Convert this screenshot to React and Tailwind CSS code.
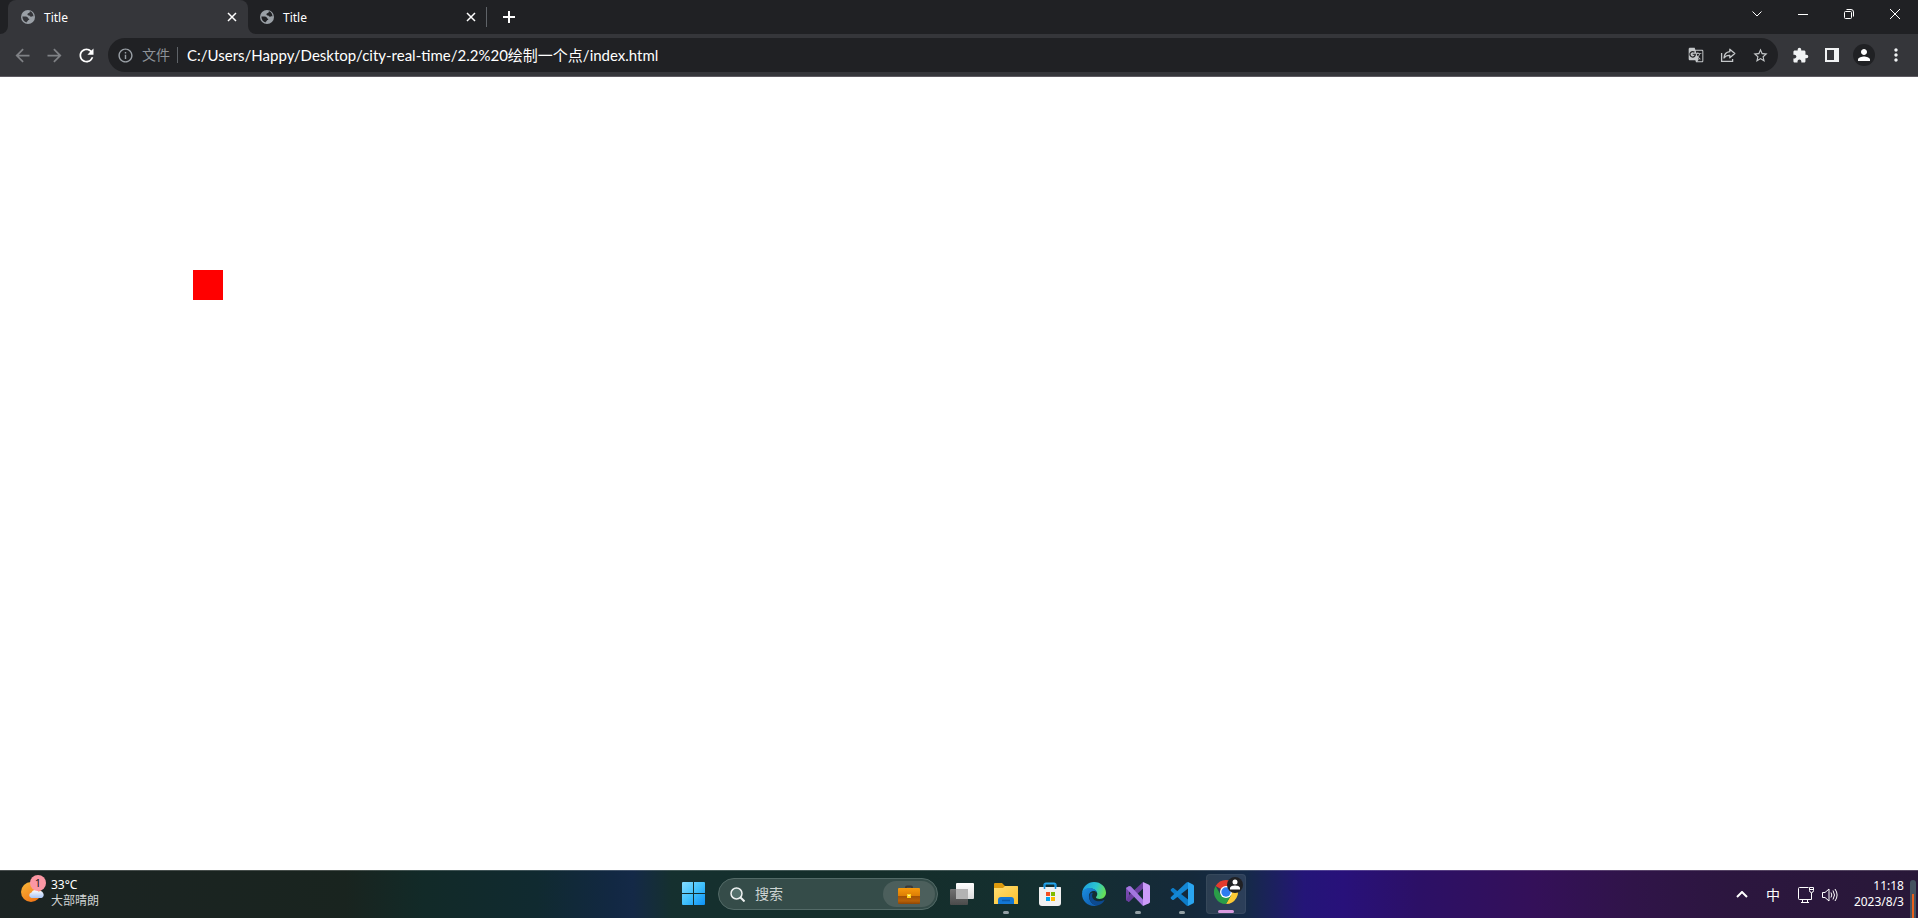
import { useState } from "react";
import {
    MdArrowBack,
    MdArrowForward,
    MdExtension,
    MdGTranslate,
    MdInfoOutline,
    MdMoreVert,
    MdPerson,
    MdRefresh,
    MdStarBorder
} from "react-icons/md";

// ICONS
function GlobeIcon({ className }) {
    return (
        <svg className={`size-[14px] shrink-0 ${className}`} viewBox="0 0 14 14">
            <circle cx="7" cy="7" r="7" fill="#9aa0a6" />
            <path d="M9.2 1.3C8.2 1.8 8.9 2.7 8 3.1 6.6 3.3 6.2 4 6.6 4.9c.6.7 1.5.3 2 .9.5.8 1.3 1.3 2.1.8.7-.5 1.3-.3 1.8 0C12.4 4.1 11.2 2.1 9.2 1.3z" fill="currentColor" />
            <path d="M1.4 6.6c1.4.1 3.4-.3 4.8.4 1 .6.8 1.6 1.7 1.8.7.3.4 1.2-.3 1.3-.9.2-.7 1.2-1.5 1.5-.5.2-.4.6-.3.9C3.2 12 1.3 9.6 1.4 6.6z" fill="currentColor" />
        </svg>
    );
}

function ShareIcon() {
    return (
        <svg className="size-4" viewBox="0 0 16 16" fill="none" stroke="currentColor" strokeWidth="1.3">
            <path d="M1.6 6v8.4h11V12" />
            <path d="M9.8 2.2l5 4.3-5 4.3V8.3C7 8.200 5.300 9 4 11c.2-3.6 2.400-5.900 5.800-6.300z" strokeLinejoin="round" />
        </svg>
    );
}

function WeatherIcon() {
    return (
        <svg className="h-7 w-[26px] shrink-0" viewBox="0 0 26 28">
            <defs>
                <linearGradient id="sun" x1="0" y1="0" x2="0.6" y2="1">
                    <stop offset="0" stopColor="#f9b93a" />
                    <stop offset="1" stopColor="#f07818" />
                </linearGradient>
                <linearGradient id="cloud" x1="0" y1="0" x2="0" y2="1">
                    <stop offset="0" stopColor="#ffffff" />
                    <stop offset="1" stopColor="#a9c4f5" />
                </linearGradient>
            </defs>
            <circle cx="11" cy="17" r="10" fill="url(#sun)" />
            <path d="M11.5 23a2.8 2.8 0 0 1 0-5.5 4 4 0 0 1 7-1 3.2 3.2 0 0 1 3 6.5z" fill="url(#cloud)" />
            <circle cx="18" cy="8" r="8" fill="#fb97a4" />
            <text x="18" y="12" fontSize="11" textAnchor="middle" fill="#1a1a1a">1</text>
        </svg>
    );
}

function WindowsIcon() {
    return (
        <svg className="size-6" viewBox="0 0 24 24">
            <defs>
                <linearGradient id="win" x1="0" y1="0" x2="1" y2="1">
                    <stop offset="0" stopColor="#84dcff" />
                    <stop offset="0.5" stopColor="#41c1fb" />
                    <stop offset="1" stopColor="#0d90f5" />
                </linearGradient>
            </defs>
            <path d="M1 0h10v11H0V1q0-1 1-1zM12 0h10q1 0 1 1v10H12zM0 12h11v11H1q-1 0-1-1zM12 12h11v10q0 1-1 1H12z" fill="url(#win)" />
        </svg>
    );
}

function BriefcaseIcon() {
    return (
        <svg className="h-[19px] w-[22px]" viewBox="0 0 22 19">
            <defs>
                <linearGradient id="bag" x1="0" y1="0" x2="0" y2="1">
                    <stop offset="0" stopColor="#f79a0c" />
                    <stop offset="0.5" stopColor="#dc7d05" />
                    <stop offset="0.52" stopColor="#a35205" />
                    <stop offset="0.8" stopColor="#b86208" />
                    <stop offset="1" stopColor="#8f4604" />
                </linearGradient>
            </defs>
            <path d="M8 4V2.5Q8 1.5 9 1.5h4q1 0 1 1V4" fill="none" stroke="#3b3a39" strokeWidth="2" />
            <rect y="3" width="22" height="16" rx="1" fill="url(#bag)" />
            <rect x="9" y="9" width="4" height="4" fill="#ffd21f" />
            <rect x="10" y="10" width="2" height="1" fill="#fff3a0" />
        </svg>
    );
}

function TaskViewIcon() {
    return (
        <svg className="size-6" viewBox="0 0 24 24">
            <defs>
                <linearGradient id="tv1" x1="0" y1="0" x2="0" y2="1">
                    <stop offset="0" stopColor="#ffffff" />
                    <stop offset="1" stopColor="#dcdcdc" />
                </linearGradient>
                <linearGradient id="tv2" x1="0" y1="0" x2="0" y2="1">
                    <stop offset="0" stopColor="#727272" />
                    <stop offset="1" stopColor="#4a4a4a" />
                </linearGradient>
            </defs>
            <rect y="7" width="18" height="16" rx="1" fill="url(#tv2)" />
            <rect x="6" y="1" width="18" height="16" rx="1" fill="url(#tv1)" />
            <path d="M6 7h12v10H7q-1 0-1-1z" fill="#b3b3b3" />
        </svg>
    );
}

function FolderIcon() {
    return (
        <svg className="size-6" viewBox="0 0 24 24">
            <defs>
                <linearGradient id="folder" x1="0" y1="0" x2="1" y2="1">
                    <stop offset="0" stopColor="#ffdf73" />
                    <stop offset="1" stopColor="#fdbf2b" />
                </linearGradient>
            </defs>
            <path d="M0 2q0-1 1-1h7l3 3h12q1 0 1 1v4H0z" fill="#dd9a0c" />
            <path d="M0 6h9l2-2h12q1 0 1 1v17H0z" fill="url(#folder)" />
            <path d="M4 22v-4q0-3 3-3h10q3 0 3 3v4z" fill="#1377d4" />
            <path d="M8 18.5h8" stroke="#0c5aa8" strokeWidth="1.5" />
        </svg>
    );
}

function StoreIcon() {
    return (
        <svg className="size-6" viewBox="0 0 24 24">
            <path d="M6.5 6V3q0-1.5 1.5-1.5h8q1.5 0 1.5 1.5v3" fill="none" stroke="#28aaf0" strokeWidth="2" />
            <path d="M1 5.5q0-.5.5-.5h21q.5 0 .5.5V21q0 3-3 3H4q-3 0-3-3z" fill="#f1f1f1" />
            <path d="M6.5 1.800V7M17.5 1.800V7" stroke="#1490df" strokeWidth="1.5" />
            <path d="M8 10h4v4H8z" fill="#f25022" />
            <path d="M13 10h4v4h-4z" fill="#7fba00" />
            <path d="M8 15h4v4H8z" fill="#00a4ef" />
            <path d="M13 15h4v4h-4z" fill="#ffb900" />
        </svg>
    );
}

function EdgeIcon() {
    return (
        <svg className="size-6" viewBox="0 0 24 24">
            <defs>
                <linearGradient id="edge1" x1="0" y1="0.2" x2="1" y2="0.5">
                    <stop offset="0" stopColor="#1d9fe0" />
                    <stop offset="0.55" stopColor="#2bc4d0" />
                    <stop offset="1" stopColor="#66e055" />
                </linearGradient>
                <linearGradient id="edge2" x1="0" y1="0" x2="0.8" y2="1">
                    <stop offset="0" stopColor="#1b8fe0" />
                    <stop offset="1" stopColor="#0f5cb0" />
                </linearGradient>
            </defs>
            <path d="M.2 10.5C1 4.3 6 0 12 0c7 0 12 5 12 10.8 0 3.7-2.9 6.1-6.3 6.1-2.2 0-3.7-.8-3.7-1.5 0-.8 1.3-1.2 1.3-3.4 0-3-2.9-5.5-7-5.5-4 0-6.9 1.7-8.1 4z" fill="url(#edge1)" />
            <path d="M0 12C0 8 3.4 5.8 7.5 5.9c4.2 0 7.3 2.3 7.8 5.2-1-1.6-2.6-2.2-4.3-2C8.3 9.500 6.700 12 7 15c.5 4.5 4 8 8 8.5-1 .4-2 .5-3 .5C5.4 24 0 18.600 0 12z" fill="url(#edge2)" />
            <path d="M8.8 11c-3.2 3.5-1.2 10.6 5.7 12.7 3.5-.6 6.3-2.7 7.8-5 .3-.5-.1-.8-.6-.5-4.5 2.4-11.6.9-11.6-4.8 0-.9.3-1.7.8-2.5-.8-.3-1.5-.4-2.1.1z" fill="#0c4a91" />
        </svg>
    );
}

function VisualStudioIcon() {
    return (
        <svg className="size-6" viewBox="0 0 24 24">
            <path d="M0 6l3-2v16l-3-2z" fill="#7648ad" />
            <path d="M3 20L17 6.500V0L3.500 12.500 0 18z" fill="#6a3e9e" />
            <path d="M0 6l3-1.800q1-.6 2 .3L17 17.500V24L3 9.500z" fill="#a376df" />
            <path d="M17 0l6 2.8q1 .5 1 1.5v15.4q0 1-1 1.5L17 24z" fill="#cb9bf8" />
        </svg>
    );
}

function VsCodeIcon() {
    return (
        <svg className="size-6" viewBox="0 0 24 24">
            <path d="M1 7.3l1.5-1.2q.5-.3 1 0L18 17.500V24q-.8 0-1.5-.6L1 9q-.8-.9 0-1.700z" fill="#0d7cc9" />
            <path d="M1 16.7l1.5 1.2q.5.3 1 0L18 6.500V0q-.8 0-1.5.6L1 15q-.8.9 0 1.7z" fill="#1487d4" />
            <path d="M18 0l5 2.6q1 .5 1 1.5v15.8q0 1-1 1.5L18 24z" fill="#2aa5f0" />
        </svg>
    );
}

function ChromeIcon() {
    return (
        <svg className="h-[27px] w-[29px]" viewBox="0 0 29 27">
            <path d="M12 15L1.6 9A12 12 0 0 1 22.4 9z" fill="#e33b2e" />
            <path d="M12 9h10.4A12 12 0 0 1 12 27l5.2-9z" fill="#fcc934" />
            <path d="M1.6 9A12 12 0 0 0 12 27l5.2-9H6.8z" fill="#2a9d48" />
            <circle cx="12" cy="15" r="6" fill="#fff" />
            <circle cx="12" cy="15" r="4.7" fill="#2f7cf0" />
            <circle cx="21" cy="8" r="8" fill="#202124" />
            <circle cx="21" cy="5" r="2.5" fill="#fff" />
            <path d="M16 12.500V11c0-1.700 3-2.500 5-2.500s5 .8 5 2.500v1.500z" fill="#fff" />
        </svg>
    );
}

const apps = [
    { name: "任务视图", icon: <TaskViewIcon /> },
    { name: "文件资源管理器", icon: <FolderIcon />, running: true },
    { name: "Microsoft Store", icon: <StoreIcon /> },
    { name: "Microsoft Edge", icon: <EdgeIcon /> },
    { name: "Visual Studio", icon: <VisualStudioIcon />, running: true },
    { name: "Visual Studio Code", icon: <VsCodeIcon />, running: true },
];

function Tab({ active }) {
    return (
        <div className={`relative flex h-[34px] w-60 items-center gap-[9px] pl-[13px] pr-2 text-white ${active ? "rounded-t-lg bg-[#35363a]" : "-ml-px"}`}>
            <GlobeIcon className={active ? "text-[#35363a]" : "text-[#202124]"} />
            <span className="flex-1 pt-0.5 text-xs">Title</span>
            <button aria-label="关闭标签页" className="flex size-4 items-center justify-center">
                <svg className="size-[10px]" viewBox="0 0 10 10" stroke="currentColor" strokeWidth="1.5"><path d="M1 1l8 8M9 1L1 9" /></svg>
            </button>
            {active ? (
                <>
                    <svg className="absolute bottom-0 -left-2 size-2" viewBox="0 0 8 8"><path d="M8 0v8H0a8 8 0 0 0 8-8z" fill="#35363a" /></svg>
                    <svg className="absolute bottom-0 -right-2 size-2" viewBox="0 0 8 8"><path d="M0 0v8h8a8 8 0 0 1-8-8z" fill="#35363a" /></svg>
                </>
            ) : null}
        </div>
    );
}

function TabStrip() {
    return (
        <div className="flex h-[34px] bg-[#202124] pl-2">
            <Tab active />
            <Tab />
            <div className="mt-[7px] -ml-px h-5 w-px bg-[#5f6368]" />
            <button aria-label="新标签页" className="ml-2 flex h-[34px] w-7 items-center justify-center text-white">
                <svg className="size-3" viewBox="0 0 12 12" stroke="currentColor" strokeWidth="2"><path d="M6 0v12M0 6h12" /></svg>
            </button>
            <div className="ml-auto flex h-7 text-white">
                <button aria-label="搜索标签页" className="flex w-[46px] items-center justify-center">
                    <svg className="h-[6px] w-[10px]" viewBox="0 0 10 6" fill="none" stroke="currentColor"><path d="M.5.5L5 5 9.5.5" /></svg>
                </button>
                <button aria-label="最小化" className="flex w-[46px] items-center justify-center">
                    <span className="h-px w-[10px] bg-white" />
                </button>
                <button aria-label="还原" className="flex w-[46px] items-center justify-center">
                    <svg className="size-[10px]" viewBox="0 0 10 10" fill="none" stroke="currentColor">
                        <rect x="0.5" y="2.5" width="7" height="7" rx="1" />
                        <path d="M2.5.5H7q2.5 0 2.5 2.5v4.5" />
                    </svg>
                </button>
                <button aria-label="关闭" className="flex w-[46px] items-center justify-center">
                    <svg className="size-[10px]" viewBox="0 0 10 10" stroke="currentColor"><path d="M0 0l10 10M10 0L0 10" /></svg>
                </button>
            </div>
        </div>
    );
}

function Toolbar() {
    const [url, setUrl] = useState("C:/Users/Happy/Desktop/city-real-time/2.2%20绘制一个点/index.html");

    return (
        <div className="flex h-[43px] items-center border-b border-[#5d5a61] bg-[#35363a] px-1.5">
            <div className="flex text-[#7f8185]">
                <button aria-label="后退" className="flex size-8 items-center justify-center"><MdArrowBack size={21} /></button>
                <button aria-label="前进" className="flex size-8 items-center justify-center"><MdArrowForward size={21} /></button>
                <button aria-label="重新加载" className="flex size-8 items-center justify-center text-white"><MdRefresh size={21} /></button>
            </div>
            <div className="ml-1.5 flex h-[34px] flex-1 items-center rounded-full bg-[#202124] pl-[9px] pr-0.5 text-sm">
                <MdInfoOutline size={17} className="shrink-0 text-[#9aa0a6]" />
                <label htmlFor="url" className="ml-2 text-[#8d9298]">文件</label>
                <div className="ml-[7px] h-4 w-px bg-[#5f6368]" />
                <input id="url" type="text" value={url} onChange={(e) => setUrl(e.target.value)} className="ml-[9px] h-8 flex-1 bg-transparent pb-0.5 font-['Lato','Noto_Sans_CJK_SC',sans-serif] text-[15px] text-white outline-none" />
                <div className="flex text-[#c4c7c9]">
                    <button aria-label="翻译此页" className="flex size-8 items-center justify-center"><MdGTranslate size={16} /></button>
                    <button aria-label="分享此页" className="flex size-8 items-center justify-center"><ShareIcon /></button>
                    <button aria-label="添加书签" className="flex size-8 items-center justify-center"><MdStarBorder size={17} /></button>
                </div>
            </div>
            <div className="ml-1.5 flex text-[#f1f3f4]">
                <button aria-label="扩展程序" className="flex size-8 items-center justify-center"><MdExtension size={17} /></button>
                <button aria-label="侧边栏" className="flex size-8 items-center justify-center">
                    <svg className="size-[14px]" viewBox="0 0 14 14"><path fillRule="evenodd" d="M0 0h14v14H0zM2 2v10h7V2z" fill="currentColor" /></svg>
                </button>
                <button aria-label="个人资料" className="flex size-8 items-center justify-center">
                    <span className="flex size-[22px] items-center justify-center rounded-full bg-[#202124] text-white"><MdPerson size={18} /></span>
                </button>
                <button aria-label="菜单" className="flex size-8 items-center justify-center"><MdMoreVert size={20} /></button>
            </div>
        </div>
    );
}

function Taskbar() {
    return (
        <footer className="grid h-12 grid-cols-[1fr_auto_1fr] border-t border-white/20 bg-[linear-gradient(90deg,#1c2423_0%,#19241f_18%,#122a28_22%,#102a30_28%,#122843_32%,#142947_33%,#15302f_35%,#152e2a_45%,#142f30_55%,#15293a_62%,#152a48_65%,#241578_68%,#28117a_70%,#2c1066_74%,#341059_80%,#301449_85%,#2c163f_90%,#281838_100%)] pl-0.5 text-white">
            <button className="mt-1 flex items-start gap-[5px] justify-self-start pl-[18px] text-left text-xs">
                <WeatherIcon />
                <span className="flex flex-col">
                    <span className="leading-5">33°C</span>
                    <span className="leading-3 text-[#d0d4d4]">大部晴朗</span>
                </span>
            </button>

            <div className="flex items-center gap-1 pb-px">
                <button aria-label="开始" className="flex size-10 items-center justify-center"><WindowsIcon /></button>
                <div className="flex h-8 w-[220px] items-center rounded-full border border-[#536a67] bg-[#354c49] pl-[11px] pr-0.5">
                    <svg className="size-[15px] shrink-0" viewBox="0 0 15 15" fill="none" stroke="#eef1f1" strokeWidth="1.5">
                        <circle cx="6.5" cy="6.5" r="5.5" fill="#54706c" />
                        <path d="M10.5 10.5l4 4" strokeWidth="2" />
                    </svg>
                    <input type="text" aria-label="搜索" placeholder="搜索" className="ml-2.5 w-0 flex-1 bg-transparent text-sm outline-none placeholder:text-[#cdd4d3]" />
                    <button aria-label="搜索要点" className="flex h-[26px] w-[52px] items-center justify-center rounded-full bg-[#4c5f5c]"><BriefcaseIcon /></button>
                </div>
                {apps.map((app) => (
                    <button key={app.name} aria-label={app.name} className="relative flex size-10 items-center justify-center">
                        {app.icon}
                        {app.running ? <span className="absolute bottom-0 left-[17px] h-[3px] w-1.5 rounded-full bg-[#93a0a5]" /> : null}
                    </button>
                ))}
                <button aria-label="Google Chrome" className="relative flex size-10 justify-center rounded border border-white/5 bg-white/10 pt-0.5 pl-1">
                    <ChromeIcon />
                    <span className="absolute bottom-0 left-[11px] h-[3px] w-4 rounded-full bg-[#d99be0]" />
                </button>
            </div>

            <div className="flex items-center justify-self-end">
                <button aria-label="显示隐藏的图标" className="flex h-10 w-7 items-center justify-center">
                    <svg className="h-[7px] w-3" viewBox="0 0 12 7" fill="none" stroke="currentColor" strokeWidth="2"><path d="M1 6l5-5 5 5" /></svg>
                </button>
                <button className="flex h-10 w-[34px] items-center justify-center text-sm">中</button>
                <button aria-label="网络和音量" className="flex h-10 items-center gap-2 pl-2">
                    <svg className="size-4" viewBox="0 0 16 16" fill="none" stroke="currentColor">
                        <path d="M10.5.5h-9q-1 0-1 1v10q0 1 1 1h12V6M4.5 12.500v3M9.5 12.500v3M3 15.500h8" />
                        <path d="M11.5.5h4v3q0 2-2 2t-2-2zM12 2.500h3" />
                    </svg>
                    <svg className="size-4" viewBox="0 0 16 16" fill="none" stroke="currentColor">
                        <path d="M.5 5.5H3L7 2v12l-4-3.500H.5z" strokeLinejoin="round" />
                        <path d="M9 5.500q1.600 2.500 0 5M11 3.500q3 4.500 0 9M13 2q4.200 6 0 12" />
                    </svg>
                </button>
                <button className="ml-4 flex flex-col pb-0.5 text-right text-xs">
                    <span>11:18</span>
                    <span>2023/8/3</span>
                </button>
                <div className="ml-1.5 mr-0.5 flex h-[38px] w-1.5 justify-center self-end rounded-t-full bg-[#44525f] pt-3.5">
                    <div className="w-0.5 bg-[#e8601c]" />
                </div>
            </div>
        </footer>
    );
}

export default function App() {
    return (
        <div className="flex min-h-screen flex-col bg-white font-['Noto_Sans','Noto_Sans_CJK_SC',sans-serif]">
            <header>
                <TabStrip />
                <Toolbar />
            </header>
            <main className="flex-1 pt-[193px] pl-[193px]">
                <div className="size-[30px] bg-[#ff0000]" />
            </main>
            <Taskbar />
        </div>
    );
}
